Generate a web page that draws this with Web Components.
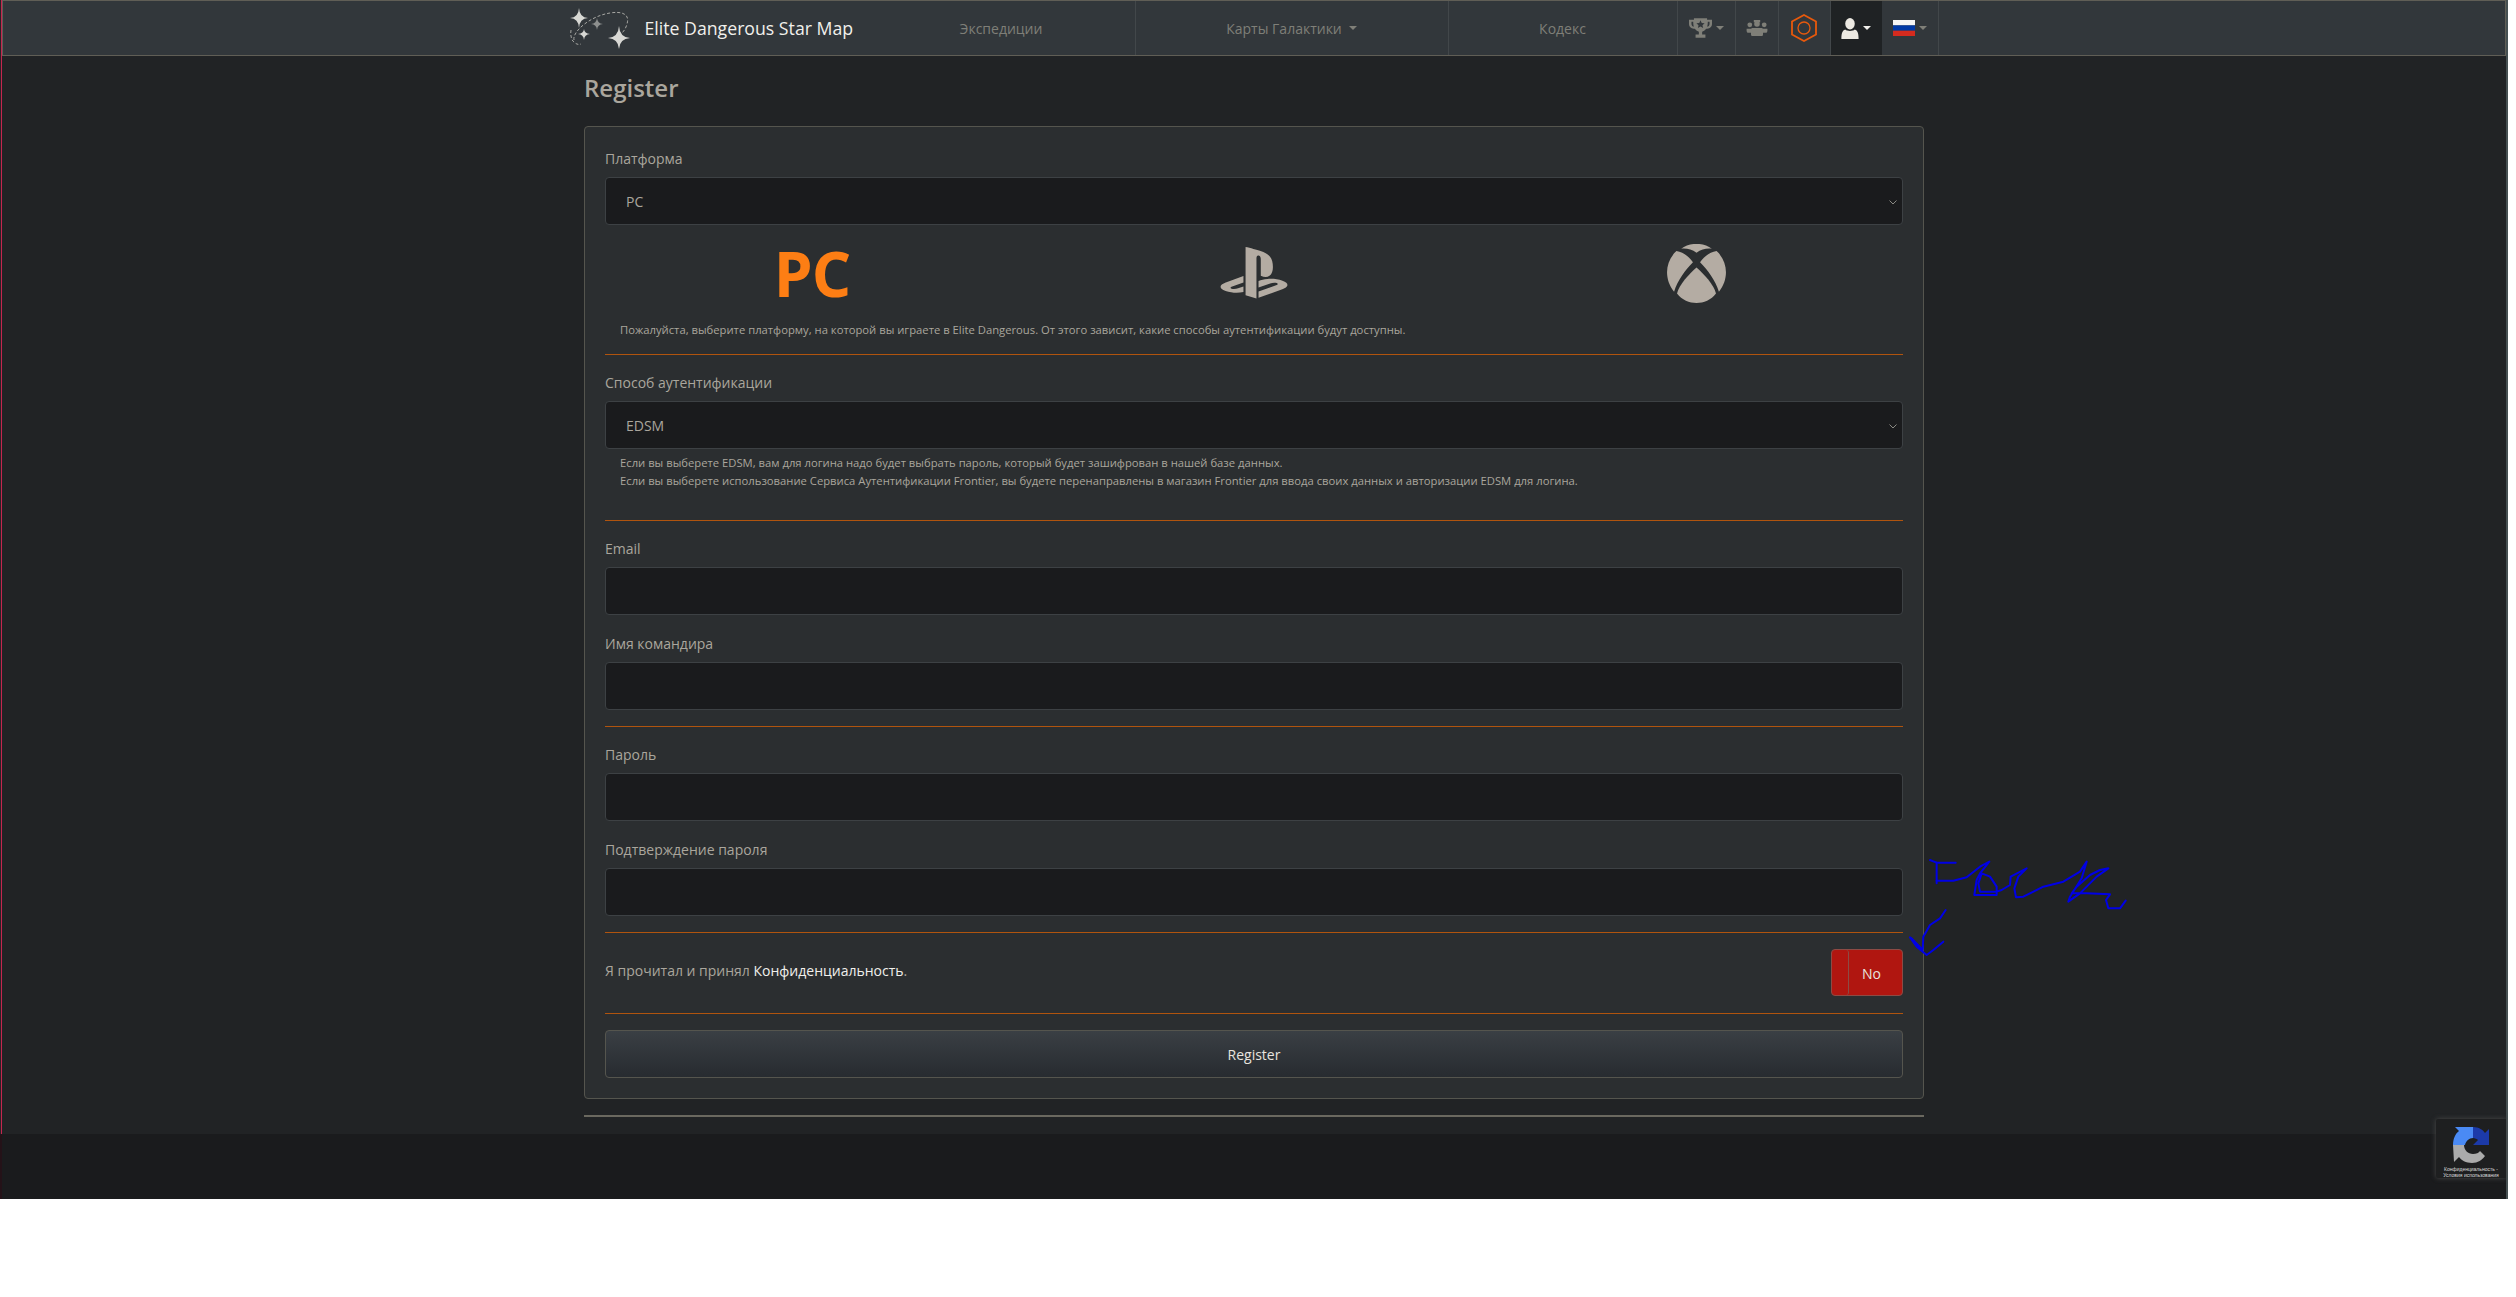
<!DOCTYPE html>
<html lang="ru">
<head>
<meta charset="utf-8">
<title>Register - Elite Dangerous Star Map</title>
<style>
  html, body { margin: 0; padding: 0; background: #fff; }
  body {
    font-family: "Open Sans", "Liberation Sans", sans-serif;
    color: #aaa69d;
    width: 2508px;
    position: relative;
    background:
      linear-gradient(#465052, #465052) right top / 2px 1199px no-repeat,
      linear-gradient(to right, #2a2226 1px, #c4264f 1px) left top / 2px 56px no-repeat;
  }
</style>
</head>
<body>
<template id="tpl-nav">
  <style>
    :host { display: flex; justify-content: center; height: 56px; box-sizing: border-box; background: #32373b; border: 1px solid #605e56; margin: 0 2px; font-size: 14px; color: #7f7f78; }
    .wrap { width: 1369px; display: flex; }
    .brand { width: 298px; display: flex; align-items: center; gap: 15px; box-sizing: border-box; color: #f1f0ec; font-size: 17.7px; white-space: nowrap; }
    .item { display: flex; align-items: center; justify-content: center; border-right: 1px solid #42474a; box-sizing: border-box; white-space: nowrap; }
    .caret { width: 0; height: 0; border: 4.5px solid transparent; border-top-color: currentColor; border-bottom: 0; margin-left: 7px; }
    .ico .caret { margin-left: 4px; }
    .active { background: #1f2224; color: #f1f0ec; }
  </style>
  <div class="wrap">
    <div class="brand"><slot name="logo"></slot><span>Elite Dangerous Star Map</span></div>
    <div class="item" style="width:268px">Экспедиции</div>
    <div class="item" style="width:313px">Карты Галактики<i class="caret"></i></div>
    <div class="item" style="width:229px">Кодекс</div>
    <div class="item ico" style="width:58px"><slot name="trophy"></slot><i class="caret"></i></div>
    <div class="item" style="width:43px"><slot name="group"></slot></div>
    <div class="item" style="width:52px"><slot name="hex"></slot></div>
    <div class="item ico active" style="width:51px;border-right:0"><slot name="user"></slot><i class="caret"></i></div>
    <div class="item ico" style="width:57px"><slot name="flag"></slot><i class="caret"></i></div>
  </div>
</template>

<template id="tpl-field">
  <style>
    :host { display: block; font-size: 14px; color: #aaa69d; }
    label { display: block; height: 21px; line-height: 21px; margin-bottom: 8px; }
    .box { height: 48px; box-sizing: border-box; background: #1a1b1d; border: 1px solid #3d4144; border-radius: 4px; color: #aaa69d; display: flex; align-items: center; justify-content: space-between; padding: 0 5px 0 20px; font-size: 14px; }
  </style>
  <label></label>
  <div class="box"><span class="val"></span><slot name="arrow"></slot></div>
</template>

<template id="tpl-toggle">
  <style>
    :host { display: block; width: 72px; height: 47px; box-sizing: border-box; background: #b01610; border: 1px solid #8c4b45; border-radius: 4px; color: #e8e4df; font-size: 14px; }
    .inner { display: flex; height: 100%; }
    .handle { width: 16px; border-right: 1px solid #8c4b45; border-radius: 3px; }
    .label { flex: 1; display: flex; align-items: center; justify-content: center; padding: 1px 8px 0 0; }
  </style>
  <div class="inner"><div class="handle"></div><div class="label">No</div></div>
</template>

<template id="tpl-captcha">
  <style>
    :host { display: block; position: absolute; left: 2436px; top: 1119px; width: 70px; height: 59px; background: #1e1f20; border-radius: 2px 0 0 2px; box-shadow: 0 0 5px #4a4a4a; color: #ddd; font-size: 5px; text-align: center; line-height: 6px; overflow: hidden; white-space: nowrap; font-family: "Liberation Sans", sans-serif; }
    svg { display: block; margin: 6px 0 3px 17px; }
  </style>
  <svg width="36" height="38" viewBox="0 0 36 38">
    <path d="M0 20 C0 14 2 9 6 6 L2 2 H20 V13 C16 13 13 16 12 20 Z" fill="#4a8af4"/>
    <path d="M20 2 C26 2 30 5 32 8 L36 4 V20 H20 L25 15 C24 14 22 13 20 13 Z" fill="#1c3aa9"/>
    <path d="M0 20 H11 C11 25 15 29 20 29 C23 29 26 28 27 26 L32 31 C29 35 25 38 19 38 C13 38 8 35 6 32 L1 37 Z" fill="#ababab"/>
  </svg>
  <div>Конфиденциальность -<br>Условия использования</div>
</template>

<script>
class EdsmNav extends HTMLElement {
  constructor() {
    super();
    this.attachShadow({ mode: 'open' }).appendChild(document.getElementById('tpl-nav').content.cloneNode(true));
  }
}
class EdsmField extends HTMLElement {
  constructor() {
    super();
    this.attachShadow({ mode: 'open' }).appendChild(document.getElementById('tpl-field').content.cloneNode(true));
  }
  connectedCallback() {
    this.shadowRoot.querySelector('label').textContent = this.getAttribute('label') || '';
    this.shadowRoot.querySelector('.val').textContent = this.getAttribute('value') || '';
  }
}
class EdsmToggle extends HTMLElement {
  constructor() {
    super();
    this.attachShadow({ mode: 'open' }).appendChild(document.getElementById('tpl-toggle').content.cloneNode(true));
  }
}
class EdsmCaptcha extends HTMLElement {
  constructor() {
    super();
    this.attachShadow({ mode: 'open' }).appendChild(document.getElementById('tpl-captcha').content.cloneNode(true));
  }
}
class EdsmPage extends HTMLElement {
  constructor() {
    super();
    this.attachShadow({ mode: 'open' }).innerHTML = `
      <style>
        :host { display: block; margin-right: 2px; height: 1078px; background: linear-gradient(to right, #2a2226 1px, #c4264f 1px, #c4264f 2px, #212325 2px); }
        .container { width: 1340px; margin-left: 584px; }
        h2 { margin: 0; height: 70px; line-height: 64px; font-size: 24px; font-weight: 600; color: #aaa69d; }
        hr { height: 2px; border: 0; background: #6a685f; margin: 16px 0 0; }
      </style>
      <div class="container">
        <h2>Register</h2>
        <slot></slot>
        <hr>
      </div>`;
  }
}
class EdsmCard extends HTMLElement {
  constructor() {
    super();
    this.attachShadow({ mode: 'open' }).innerHTML = `
      <style>
        :host { display: block; height: 973px; box-sizing: border-box; background: #2b2e30; border: 1px solid #55554e; border-radius: 4px; padding: 21px 20px 0; font-size: 14px; }
      </style>
      <slot></slot>`;
  }
}
class EdsmFooter extends HTMLElement {
  constructor() {
    super();
    this.attachShadow({ mode: 'open' }).innerHTML = `<style>:host { display: block; height: 65px; margin-right: 2px; background: #1a1b1d; border-left: 2px solid #241218; box-sizing: border-box; }</style>`;
  }
}
customElements.define('edsm-nav', EdsmNav);
customElements.define('edsm-field', EdsmField);
customElements.define('edsm-toggle', EdsmToggle);
customElements.define('edsm-captcha', EdsmCaptcha);
customElements.define('edsm-page', EdsmPage);
customElements.define('edsm-card', EdsmCard);
customElements.define('edsm-footer', EdsmFooter);
</script>

<style>
  .logos { display: grid; grid-template-columns: repeat(3, 442px); justify-content: center; align-items: center; justify-items: center; height: 96px; }
  .logos svg { display: block; }
  .help { font-size: 11.25px; color: #aaa69d; padding-left: 15px; line-height: 18px; }
  .line { height: 1px; background: #b0540e; border: 0; margin: 0; }
  .row { display: flex; justify-content: space-between; align-items: center; }
  a { color: #f1f0ec; text-decoration: none; }
  .btn { height: 48px; box-sizing: border-box; border: 1px solid #55554e; border-radius: 4px; background: linear-gradient(#3a3f44, #272b30); color: #e8e4df; font-size: 14px; display: flex; align-items: center; justify-content: center; }
  .chev { display: block; margin-top: 2px; }
</style>

<edsm-nav>
  <svg slot="logo" width="60" height="41" viewBox="0 0 60 41" fill="#d8d8d4" style="display:block">
    <g fill="none" stroke="#a8a8a4" stroke-width="1" stroke-dasharray="3 2">
      <path d="M4 32 C2 24 20 8 40 5 C52 3 60 6 57 16 C56 20 54 23 52 25"/>
      <path d="M1 22 C0 28 2 33 4 34 C6 36 8 37 11 36"/>
    </g>
    <path d="M9 0 Q9.500 9.500 18 10 Q9.500 10.500 9 20 Q8.500 10.500 0 10 Q8.500 9.500 9 0 Z"/>
    <path d="M49 18 Q49.700 29.300 60 30 Q49.700 30.700 49 41 Q48.300 30.700 38 30 Q48.300 29.300 49 18 Z"/>
    <path d="M14 21 Q14.400 25.600 20 26 Q14.400 26.400 14 32 Q13.600 26.400 8 26 Q13.600 25.600 14 21 Z"/>
    <path d="M27 10 Q27.400 15.600 33 16 Q27.400 16.400 27 22 Q26.600 16.400 21 16 Q26.600 15.600 27 10 Z" opacity=".55"/>
  </svg>
  <svg slot="trophy" width="23" height="20" viewBox="0 0 28 24" fill="#7f7f78" style="display:block">
    <path d="M6 0 H22 V2 H28 V7 C28 11 24 13 21 13 C19.500 15 17.500 16 16 16.500 V20 H20 V24 H8 V20 H12 V16.500 C10.500 16 8.500 15 7 13 C4 13 0 11 0 7 V2 H6 Z M3 4.500 V7 C3 9 4.500 10 5.800 10.400 C5.300 8.500 5.100 6.500 5.100 4.500 Z M25 4.500 H22.900 C22.900 6.500 22.700 8.500 22.200 10.400 C23.500 10 25 9 25 7 Z"/>
    <path d="M14 2.500 L15.500 6 L19 6.300 L16.400 8.600 L17.200 12 L14 10.200 L10.800 12 L11.600 8.600 L9 6.300 L12.500 6 Z" fill="#32373b"/>
  </svg>
  <svg slot="group" width="26" height="16" viewBox="0 0 26 20" fill="#7f7f78" style="display:block">
    <circle cx="4" cy="6" r="3"/><circle cx="22" cy="6" r="3"/>
    <path d="M9 0 H17 V3 H9 Z"/><circle cx="13" cy="5" r="3.500"/>
    <path d="M0 11 H6 V16 H1 L0 14 Z M20 11 H26 V14 L25 16 H20 Z"/>
    <path d="M7 10 H19 C20 10 20.500 11 20.500 12 V18 C20.500 19 20 20 19 20 H7 C6 20 5.500 19 5.500 18 V12 C5.500 11 6 10 7 10 Z"/>
  </svg>
  <svg slot="hex" width="26" height="28" viewBox="0 0 26 28" fill="none" stroke="#e8590c" style="display:block">
    <path d="M13 1 L25 7.500 V20.500 L13 27 L1 20.500 V7.500 Z" stroke-width="1.800"/>
    <circle cx="13" cy="14" r="6" stroke-width="1.300"/>
  </svg>
  <svg slot="user" width="18" height="21" viewBox="0 0 18 22" fill="#ece9e2" style="display:block">
    <ellipse cx="9" cy="6" rx="5" ry="6"/>
    <path d="M4 12 C6 14 12 14 14 12 C17 13 18 16 18 22 H0 C0 16 1 13 4 12 Z"/>
  </svg>
  <svg slot="flag" width="22" height="16" viewBox="0 0 22 16" style="display:block">
    <rect width="22" height="5.400" fill="#f5f5f5"/><rect y="5.400" width="22" height="5.300" fill="#0039a6"/><rect y="10.700" width="22" height="5.300" fill="#d52b1e"/>
  </svg>
</edsm-nav>

<edsm-page>
  <edsm-card>
    <edsm-field label="Платформа" value="PC">
      <svg slot="arrow" class="chev" width="8" height="5" viewBox="0 0 8 5" fill="none" stroke="#8a8a84" stroke-width="1"><path d="M0.500 0.500 L4 4 L7.500 0.500"/></svg>
    </edsm-field>
    <div class="logos">
      <div><span style="font:700 62px/1 'Open Sans',sans-serif;color:#fd7e14;letter-spacing:-1px">PC</span></div>
      <div>
        <svg width="68" height="52" viewBox="0 32 576 448" fill="#b4aca3">
          <path d="M570.900 372.300c-11.300 14.200-38.800 24.300-38.800 24.300L327 470.200v-54.300l150.900-53.800c17.100-6.100 19.800-14.800 5.800-19.400-13.900-4.600-39.100-3.300-56.200 2.900L327 381.100v-56.400c23.200-7.800 47.100-13.600 75.700-16.800 40.900-4.500 90.900.6 130.200 15.500 44.200 14 49.200 34.700 38 48.900zm-224.400-92.500v-139c0-16.300-3-31.300-18.300-35.600-11.700-3.800-19 7.100-19 23.400v347.900l-93.800-29.800V32c39.900 7.400 98 24.900 129.200 35.400C424.100 94.700 451 128.700 451 205.200c0 74.500-46 102.800-104.500 74.600zM43.200 410.200c-45.400-12.800-53-39.500-32.300-54.800 19.100-14.200 51.700-24.900 51.700-24.900l134.500-47.800v54.500l-96.800 34.600c-17.100 6.100-19.700 14.800-5.800 19.400 13.900 4.600 39.100 3.300 56.200-2.900l46.400-16.900v48.800c-51.600 9.300-101.400 7.300-153.900-10z"/>
        </svg>
      </div>
      <div>
        <svg width="59" height="59" viewBox="0 0 100 100" fill="#b4aca3">
          <path d="M50 15 C42 9 33 7 24 8 C38 -3 62 -3 76 8 C67 7 58 9 50 15 Z"/>
          <path d="M16 12 C28 14 38 22 44 31 C30 45 18 62 12 81 C-5 60 -4 30 16 12 Z"/>
          <path d="M84 12 C72 14 62 22 56 31 C70 45 82 62 88 81 C105 60 104 30 84 12 Z"/>
          <path d="M50 40 C62 50 80 70 83 84 C75 95 62 100 50 100 C38 100 25 95 17 84 C20 70 38 50 50 40 Z"/>
        </svg>
      </div>
    </div>
    <div class="help" style="height:33px">Пожалуйста, выберите платформу, на которой вы играете в Elite Dangerous. От этого зависит, какие способы аутентификации будут доступны.</div>
    <hr class="line">
    <edsm-field label="Способ аутентификации" value="EDSM" style="margin-top:17px">
      <svg slot="arrow" class="chev" width="8" height="5" viewBox="0 0 8 5" fill="none" stroke="#8a8a84" stroke-width="1"><path d="M0.500 0.500 L4 4 L7.500 0.500"/></svg>
    </edsm-field>
    <div class="help" style="height:66px;margin-top:5px">Если вы выберете EDSM, вам для логина надо будет выбрать пароль, который будет зашифрован в нашей базе данных.<br>Если вы выберете использование Сервиса Аутентификации Frontier, вы будете перенаправлены в магазин Frontier для ввода своих данных и авторизации EDSM для логина.</div>
    <hr class="line">
    <edsm-field label="Email" style="margin-top:17px"></edsm-field>
    <edsm-field label="Имя командира" style="margin-top:18px"></edsm-field>
    <hr class="line" style="margin-top:16px">
    <edsm-field label="Пароль" style="margin-top:17px"></edsm-field>
    <edsm-field label="Подтверждение пароля" style="margin-top:18px"></edsm-field>
    <hr class="line" style="margin-top:16px">
    <div class="row" style="margin-top:16px;height:47px">
      <span style="margin-top:-4px">Я прочитал и принял <a>Конфиденциальность</a>.</span>
      <edsm-toggle></edsm-toggle>
    </div>
    <hr class="line" style="margin-top:17px">
    <div class="btn" style="margin-top:16px">Register</div>
  </edsm-card>
</edsm-page>
<edsm-footer></edsm-footer>
<edsm-captcha></edsm-captcha>

<svg width="370" height="190" viewBox="0 0 1110 570" fill="none" stroke="#0000e6" stroke-width="6" stroke-linejoin="round" stroke-linecap="round" style="position:absolute;left:1780px;top:840px">
  <polyline points="450,60 460,64 470,68 527,68"/>
  <polyline points="470,68 470,130"/>
  <polyline points="470,122 520,122 560,112 600,80 628,65 600,100 590,120 583,165 650,165 650,140 630,110 605,100 595,130 600,155 650,155 665,150 690,135 692,110 740,85 715,110 703,145 708,172 730,170 790,140 850,125 900,95 920,65 905,115 870,170 865,185 900,160 950,110 985,85 960,90 930,105 890,140 875,160 920,160 990,163 978,180 985,205 1020,205 1037,182"/>
  <polyline points="497,210 480,235 450,255 430,290 428,330 395,295 390,292 410,320 440,345 460,330 490,305"/>
</svg>
</body>
</html>
